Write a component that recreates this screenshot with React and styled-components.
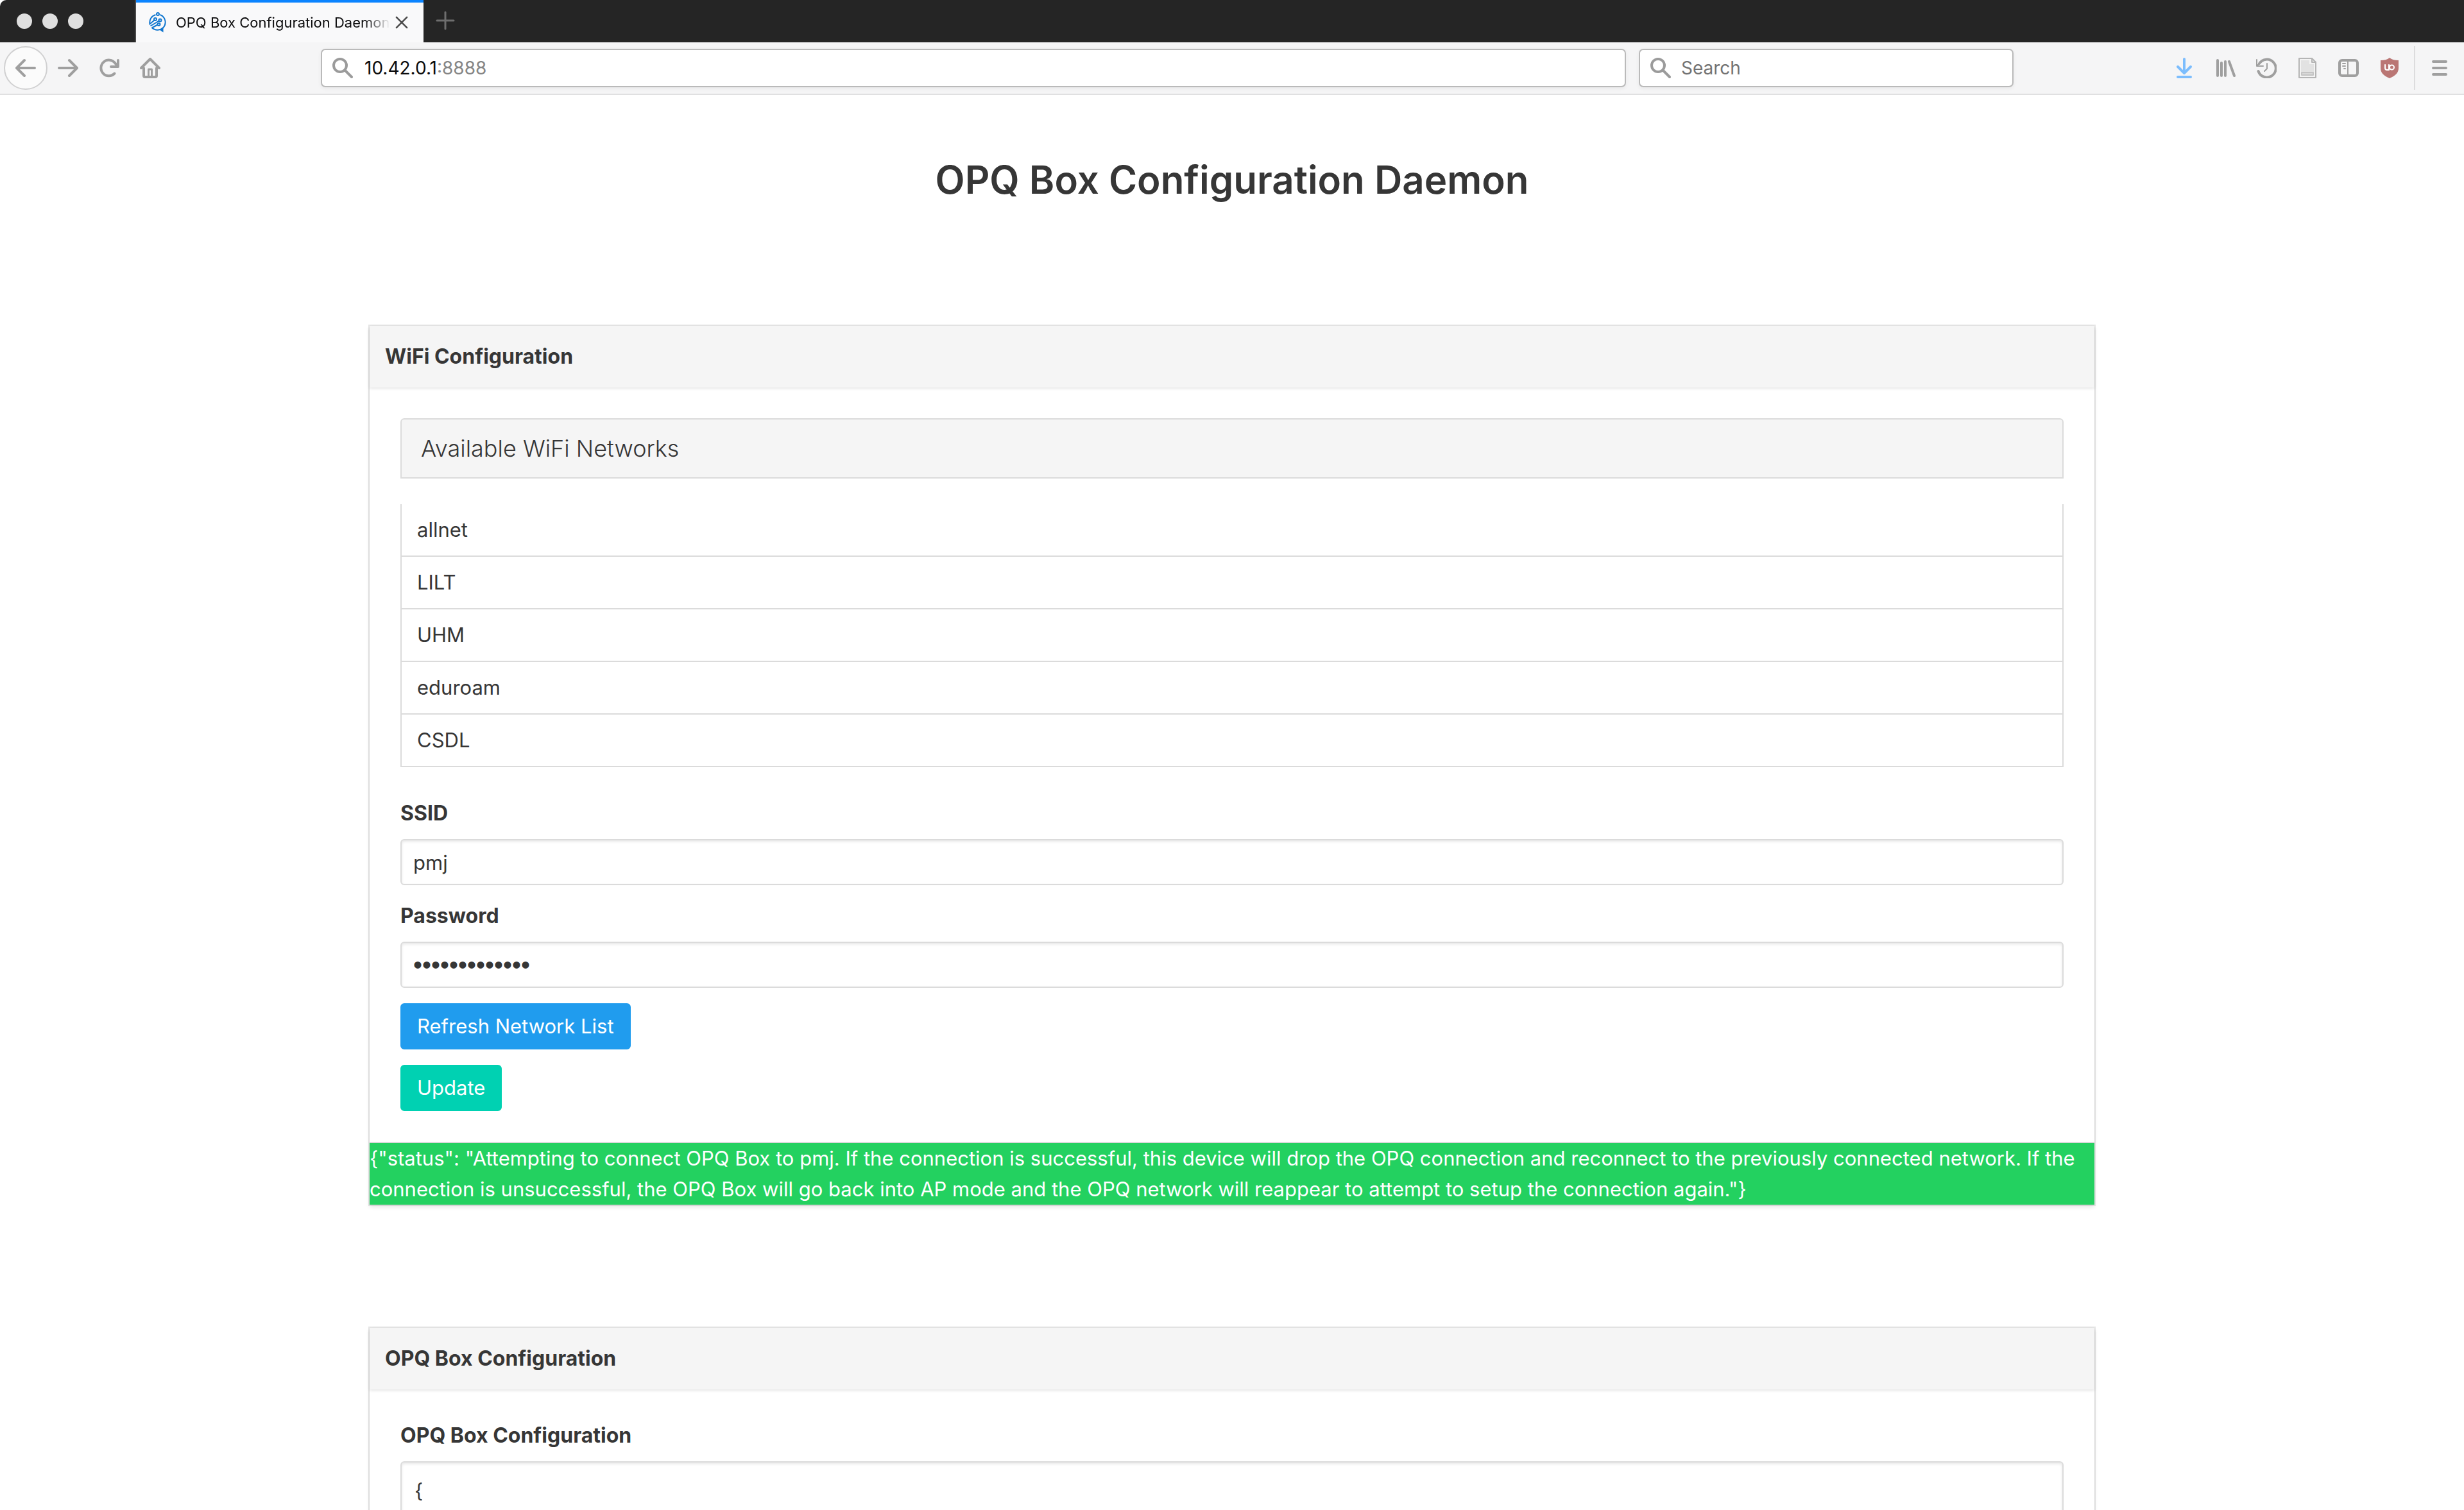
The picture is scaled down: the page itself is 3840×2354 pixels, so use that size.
import React from "react";
import styled, { createGlobalStyle, css } from "styled-components";

const GlobalStyle = createGlobalStyle`
  *, *::before, *::after { box-sizing: border-box; }
  body {
    margin: 0;
    background: #fff;
    color: #363636;
    font-family: Inter, "Liberation Sans", sans-serif;
    font-size: 31px;
    line-height: 48px;
  }
  button, input, textarea { font: inherit; color: inherit; margin: 0; }
  h1, p, ul { margin: 0; padding: 0; }
`;

const Window = styled.div`
  display: flex;
  flex-direction: column;
  height: 100vh;
  overflow: hidden;
`;

const TabBar = styled.header`
  display: flex;
  flex: none;
  height: 66px;
  background: #252525;
  border-top-left-radius: 10px;
`;

const WindowControls = styled.div`
  display: flex;
  align-items: center;
  gap: 16px;
  width: 212px;
  padding-left: 26px;
  border-right: 2px solid #4a4a4a;
`;

const WindowDot = styled.span`
  width: 24px;
  height: 24px;
  border-radius: 50%;
  background: #dfdfdf;
`;

const Tab = styled.div`
  display: flex;
  align-items: center;
  width: 448px;
  padding: 0 16px 0 20px;
  background: #f9f9fa;
  border-top: 4px solid #0a84ff;
  color: #0c0c0d;
  font-size: 22px;
`;

const TabTitle = styled.span`
  flex: 1;
  margin-left: 14px;
  overflow: hidden;
  white-space: nowrap;
  line-height: 28px;
  mask-image: linear-gradient(to left, transparent, #000 40px);
`;

const BareButton = styled.button`
  display: flex;
  align-items: center;
  justify-content: center;
  flex: none;
  padding: 0;
  border: 0;
  background: none;
`;

const TabClose = styled(BareButton)`
  width: 36px;
  height: 36px;
`;

const NewTab = styled(BareButton)`
  width: 68px;
  height: 64px;
`;

const Toolbar = styled.nav`
  display: flex;
  align-items: center;
  flex: none;
  height: 82px;
  padding: 0 6px;
  background: #f5f5f6;
  border-bottom: 2px solid #e0e0e1;
`;

const ToolButton = styled(BareButton)`
  width: 64px;
  height: 68px;
  ${(p) => p.$round && css`
    width: 68px;
    border: 2px solid #d0d0d1;
    border-radius: 50%;
    background: #fbfbfb;
  `}
`;

const ToolSpacer = styled.div`
  flex: 0 1 234px;
`;

const ToolDivider = styled.span`
  width: 2px;
  height: 68px;
  margin: 0 6px;
  background: #dcdcdd;
`;

const AddressBox = styled.div`
  display: flex;
  align-items: center;
  gap: 16px;
  height: 60px;
  padding: 0 16px;
  flex: ${(p) => (p.$search ? "0 1 584px" : "1 1 0")};
  margin-left: ${(p) => (p.$search ? "20px" : "0")};
  border: 2px solid #bababa;
  border-radius: 7px;
  background: #fff;
  box-shadow: 0 2px 6px rgba(0, 0, 0, 0.06);
  font-size: 28px;
`;

const SearchInput = styled.input`
  flex: 1;
  min-width: 0;
  padding: 0;
  border: 0;
  outline: 0;
  background: none;
  line-height: 40px;
  &::placeholder { color: #737373; opacity: 1; }
`;

const Url = styled.span`
  padding-left: 2px;
  color: #0c0c0d;
  line-height: 40px;
`;

const Port = styled.span`
  color: #858585;
`;

const Page = styled.main`
  flex: 1;
  overflow-y: auto;
  scrollbar-width: none;
`;

const Section = styled.section`
  padding: 96px 15% 96px;
`;

const Title = styled.h1`
  text-align: center;
  font-size: 60px;
  font-weight: 600;
  line-height: 72px;
`;

const Card = styled.article`
  background: #fff;
  box-shadow: 0 4px 6px rgba(10, 10, 10, 0.1), 0 0 0 2px rgba(10, 10, 10, 0.1);
`;

const CardHeader = styled.header`
  padding: 24px;
  background: #f5f5f5;
  box-shadow: 0 2px 4px rgba(10, 10, 10, 0.1);
  font-size: 32px;
  font-weight: 700;
`;

const CardContent = styled.div`
  padding: 48px;
`;

const CardFooter = styled.footer`
  border-top: 2px solid #dbdbdb;
  background: #23d160;
  color: #fff;
`;

const PanelHeading = styled.p`
  margin-bottom: 40px;
  padding: 20px 30px;
  border: 2px solid #dbdbdb;
  border-radius: 6px 6px 0 0;
  background: #f5f5f5;
  font-size: 36px;
  font-weight: 300;
  line-height: 50px;
`;

const NetworkList = styled.ul`
  margin-bottom: 48px;
  list-style: none;
`;

const Network = styled.li`
  padding: 16px 24px;
  border: 2px solid #dbdbdb;
  border-top: 0;
`;

const Form = styled.form`
  display: flex;
  flex-direction: column;
  align-items: flex-start;
  gap: 24px;
`;

const Field = styled.div`
  display: flex;
  flex-direction: column;
  gap: 16px;
  width: 100%;
`;

const Label = styled.label`
  font-size: 32px;
  font-weight: 700;
`;

const fieldBox = css`
  width: 100%;
  border: 2px solid #dbdbdb;
  border-radius: 6px;
  outline: 0;
  background: #fff;
  box-shadow: inset 0 2px 4px rgba(10, 10, 10, 0.1);
`;

const Input = styled.input`
  ${fieldBox}
  height: 72px;
  padding: 10px 18px;
  &[type="password"] {
    font-family: "Liberation Sans", sans-serif;
    font-size: 40px;
  }
`;

const TextArea = styled.textarea`
  ${fieldBox}
  min-height: 240px;
  padding: 20px;
  resize: none;
`;

const Button = styled.button`
  height: 72px;
  padding: 10px 24px;
  border: 2px solid ${(p) => (p.$tone === "info" ? "#209cee" : "#00d1b2")};
  border-radius: 6px;
  background: ${(p) => (p.$tone === "info" ? "#209cee" : "#00d1b2")};
  color: #fff;
`;

const Icon = ({ children, size = 32, color = "#9f9f9f", width = 4 }) => (
  <svg
    width={size}
    height={size}
    viewBox="0 0 32 32"
    fill="none"
    stroke={color}
    strokeWidth={width}
    strokeLinecap="round"
    strokeLinejoin="round"
    aria-hidden="true"
  >
    {children}
  </svg>
);

const Favicon = () => (
  <svg width="28" height="32" viewBox="0 0 28 32" fill="none" stroke="#1277cf" strokeWidth="2" aria-hidden="true">
    <circle cx="14" cy="3" r="2" />
    <path d="M10.500 4A12.500 12.500 0 0 0 1.500 18.500L8.500 12.500" />
    <path d="M17.500 4A12.500 12.500 0 0 1 21.500 25" />
    <path d="M2.500 21.500L15.800 13.500" />
    <path d="M4.500 24.500L13.800 19.500" />
    <path d="M5 24.500c3.500 3 8 4 12.500 2.500" />
    <path d="M22.500 23v8.500L16 27z" fill="#1277cf" stroke="none" />
    <circle cx="10" cy="11" r="2" />
    <circle cx="17.500" cy="12.500" r="2" />
    <circle cx="15.500" cy="19" r="2" />
  </svg>
);

const MagnifierIcon = () => (
  <Icon color="#9b9b9b">
    <circle cx="12" cy="12" r="10" />
    <path d="M19.500 19.500L30 30" />
  </Icon>
);

const NETWORKS = ["allnet", "LILT", "UHM", "eduroam", "CSDL"];

const STATUS =
  '{"status": "Attempting to connect OPQ Box to pmj. If the connection is successful, this device will drop the OPQ connection and reconnect to the previously connected network. If the connection is unsuccessful, the OPQ Box will go back into AP mode and the OPQ network will reappear to attempt to setup the connection again."}';

function BrowserTabs() {
  return (
    <TabBar>
      <WindowControls>
        <WindowDot />
        <WindowDot />
        <WindowDot />
      </WindowControls>
      <Tab>
        <Favicon />
        <TabTitle>OPQ Box Configuration Daemon</TabTitle>
        <TabClose aria-label="Close tab">
          <Icon size={20} color="#4a4a4a">
            <path d="M3 3l26 26M29 3L3 29" />
          </Icon>
        </TabClose>
      </Tab>
      <NewTab aria-label="New tab">
        <Icon color="#6e6e6e" width={3}>
          <path d="M16 3v26M3 16h26" />
        </Icon>
      </NewTab>
    </TabBar>
  );
}

function BrowserToolbar() {
  return (
    <Toolbar>
      <ToolButton $round aria-label="Back">
        <Icon><path d="M30 16H3M14 4L2 16l12 12" /></Icon>
      </ToolButton>
      <ToolButton aria-label="Forward">
        <Icon><path d="M2 16h27M18 4l12 12-12 12" /></Icon>
      </ToolButton>
      <ToolButton aria-label="Reload">
        <Icon>
          <path d="M24.500 24.500A12.300 12.300 0 1 1 25.500 8.500L29 13M30 4v10H19" />
        </Icon>
      </ToolButton>
      <ToolButton aria-label="Home">
        <Icon>
          <path d="M2 16L16 2l14 14" />
          <path d="M6 16v12a2 2 0 0 0 2 2h16a2 2 0 0 0 2-2V16" />
          <path d="M13.500 28V18h5v10" strokeWidth="3" />
        </Icon>
      </ToolButton>
      <ToolSpacer />
      <AddressBox>
        <MagnifierIcon />
        <Url>10.42.0.1<Port>:8888</Port></Url>
      </AddressBox>
      <AddressBox $search>
        <MagnifierIcon />
        <SearchInput type="text" placeholder="Search" aria-label="Search" />
      </AddressBox>
      <ToolSpacer />
      <ToolButton aria-label="Downloads">
        <Icon color="#7cbdfd"><path d="M16 2v22M6 14l10 10 10-10M6 30h20" /></Icon>
      </ToolButton>
      <ToolButton aria-label="Library">
        <Icon><path d="M4 4v24M10 8v20M16 6v22M22 6l8 22" /></Icon>
      </ToolButton>
      <ToolButton aria-label="History">
        <Icon>
          <path d="M3.500 21A14 14 0 1 0 5 9" />
          <path d="M1 3v10h10M1.500 12.500L8 6" strokeWidth="2" />
          <path d="M17 9v8l-4 4" strokeWidth="2" />
        </Icon>
      </ToolButton>
      <ToolButton aria-label="Notes">
        <Icon color="#b5b5b5" width={2}>
          <path d="M3 1h20l6 6v24H3z" fill="#f3f3f3" />
          <path d="M6 4h13v6h7v17H6z" fill="#e2e2e2" stroke="none" />
          <path d="M23 1v6h6" />
          <path d="M7 23h18v4H7z" stroke="#c4c4c4" fill="#d8d8d8" />
        </Icon>
      </ToolButton>
      <ToolButton aria-label="Sidebars">
        <Icon>
          <rect x="2" y="4" width="28" height="24" rx="4" />
          <path d="M15 5v22" strokeWidth="2" />
          <path d="M7 9h4M7 13h4M9 17h2" strokeWidth="2" />
        </Icon>
      </ToolButton>
      <ToolButton aria-label="Ad blocker">
        <Icon color="#fff" width={2}>
          <path d="M16 0c4 3 8 4 14 4v12c0 8-5 12-14 16C7 28 2 24 2 16V4c6 0 10-1 14-4z" fill="#ba7674" stroke="none" />
          <path d="M9 11v5a3 3 0 0 0 3 3h3v-8" />
          <circle cx="19.500" cy="15" r="3.500" />
        </Icon>
      </ToolButton>
      <ToolDivider />
      <ToolButton aria-label="Menu">
        <Icon><path d="M6 6h20M6 16h20M6 26h20" /></Icon>
      </ToolButton>
    </Toolbar>
  );
}

export default function App() {
  return (
    <Window>
      <GlobalStyle />
      <BrowserTabs />
      <BrowserToolbar />
      <Page>
        <Section>
          <Title>OPQ Box Configuration Daemon</Title>
        </Section>
        <Section>
          <Card>
            <CardHeader>WiFi Configuration</CardHeader>
            <CardContent>
              <PanelHeading>Available WiFi Networks</PanelHeading>
              <NetworkList>
                {NETWORKS.map((name) => (
                  <Network key={name}>{name}</Network>
                ))}
              </NetworkList>
              <Form onSubmit={(e) => e.preventDefault()}>
                <Field>
                  <Label htmlFor="ssid">SSID</Label>
                  <Input id="ssid" type="text" defaultValue="pmj" />
                </Field>
                <Field>
                  <Label htmlFor="password">Password</Label>
                  <Input id="password" type="password" defaultValue="opqboxsecret1" />
                </Field>
                <Button type="button" $tone="info">Refresh Network List</Button>
                <Button type="submit">Update</Button>
              </Form>
            </CardContent>
            <CardFooter>{STATUS}</CardFooter>
          </Card>
        </Section>
        <Section>
          <Card>
            <CardHeader>OPQ Box Configuration</CardHeader>
            <CardContent>
              <Field>
                <Label htmlFor="config">OPQ Box Configuration</Label>
                <TextArea id="config" defaultValue={"{"} />
              </Field>
            </CardContent>
          </Card>
        </Section>
      </Page>
    </Window>
  );
}
